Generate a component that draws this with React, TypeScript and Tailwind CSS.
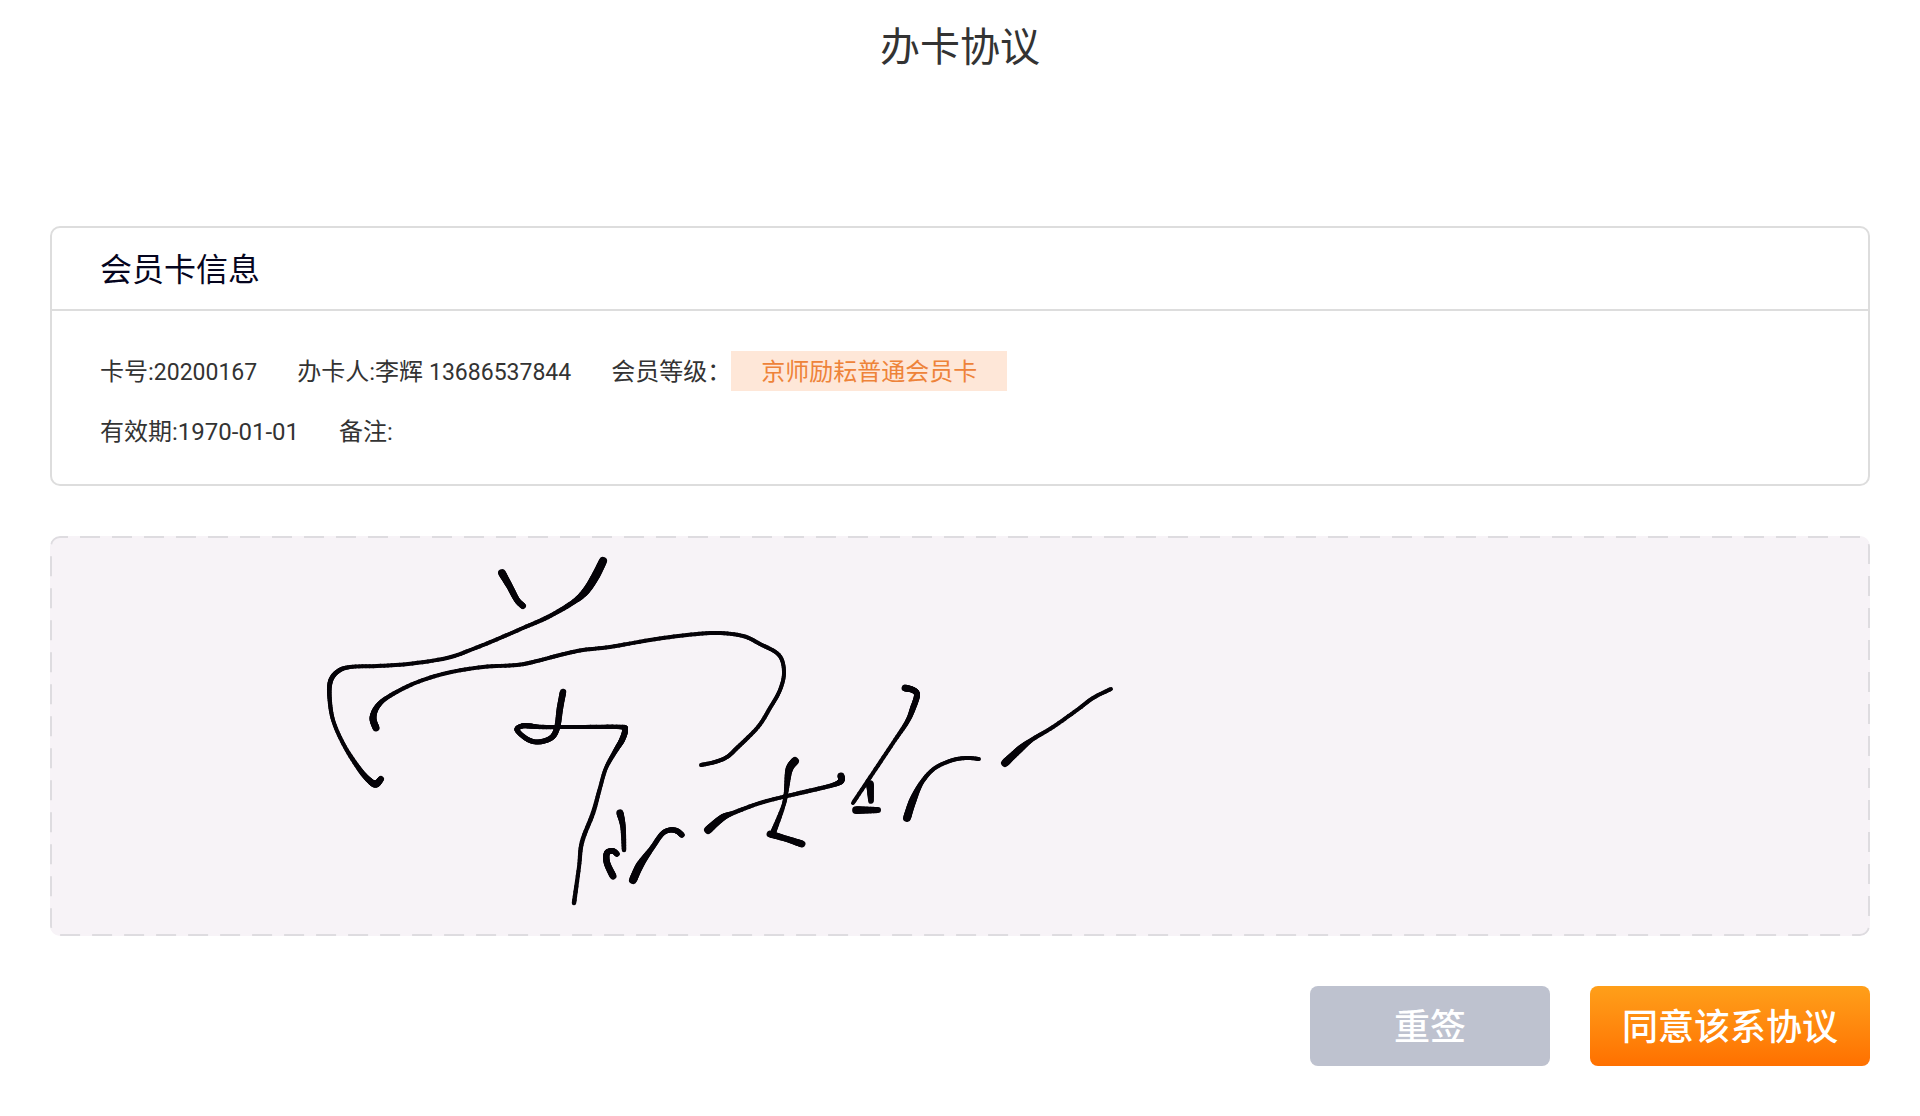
import type { ReactNode } from "react";
import clsx from "clsx";

// x, y and pen width at that point
type PenPoint = [number, number, number];

const STROKES: PenPoint[][] = [
  [[452, 37, 8], [460, 51, 6.5], [467, 64, 6], [473, 70, 6]],
  [
    [553, 25, 8], [545, 41, 8.5], [535, 56, 7.5], [522, 67, 5], [498, 81, 4.3], [473, 92, 4],
    [450, 102, 4], [423, 113, 4], [397, 122, 4], [358, 128, 4], [327, 130, 4], [300, 131, 4],
    [287, 136, 4.7], [280, 147, 5], [280, 167, 4.3], [284, 187, 4], [295, 211, 4],
    [310, 234, 5], [320, 245, 6], [326, 248, 7], [331, 243, 6],
  ],
  [
    [326, 192, 7], [323, 182, 7], [327, 171, 5.5], [338, 161, 4.3], [365, 147, 4], [397, 137, 4],
    [433, 131, 4], [467, 129, 4], [487, 125, 4], [510, 119, 4], [533, 114, 4], [560, 111, 4],
    [600, 104, 4], [637, 99, 4], [667, 97, 4], [693, 100, 4], [710, 108, 4], [729, 119, 4],
    [734, 136, 4], [730, 154, 4], [720, 172, 4], [708, 191, 4], [688, 211, 4.3],
    [677, 221, 4], [665, 226, 4], [651, 229, 4],
  ],
  [
    [513, 156, 6.5], [510, 172, 6.5], [507, 192, 6], [501, 202, 5.5], [488, 206, 5],
    [477, 203, 5], [467, 194, 5], [472, 190, 5], [480, 190, 5.3], [493, 191, 4.3],
    [530, 191, 4], [570, 191, 4.5], [575, 194, 6], [572, 204, 6], [566, 214, 5],
    [556, 232, 4], [550, 252, 4], [543, 277, 4.5], [532, 306, 4.5], [529, 331, 4], [524, 367, 4.5],
  ],
  [[570, 277, 7.5], [573, 291, 5.5], [574, 314, 4.5]],
  [[567, 318, 5.5], [563, 315, 5.5], [557, 317, 6], [557, 327, 6.5], [563, 340, 7]],
  [
    [583, 344, 8], [590, 329, 8], [602, 312, 5], [612, 298, 5], [620, 294, 5],
    [627, 295, 5.5], [632, 299, 5.5],
  ],
  [
    [658, 294, 8], [672, 282, 7], [683, 277, 4.5], [710, 267, 4], [737, 260, 4],
    [763, 254, 4.3], [783, 249, 4.3], [791, 245, 6], [791, 240, 7],
  ],
  [[745, 225, 8], [739, 234, 7.5], [736, 257, 4.5], [733, 271, 4], [723, 297, 6]],
  [[720, 298, 7], [737, 303, 6], [752, 308, 7]],
  [
    [855, 152, 7], [863, 154, 6], [867, 159, 6], [863, 172, 6], [857, 186, 4.7],
    [843, 207, 4], [823, 237, 4], [803, 267, 4],
  ],
  [[820, 248, 8], [821, 265, 5.5]],
  [[806, 274, 8], [828, 274, 6]],
  [
    [857, 282, 8], [863, 264, 7.5], [872, 246, 4.5], [885, 232, 4], [903, 224, 4],
    [917, 222, 4], [929, 223, 4],
  ],
  [
    [955, 227, 8], [970, 213, 7], [983, 203, 4.3], [1003, 191, 4], [1027, 174, 4],
    [1043, 162, 4], [1061, 153, 4],
  ],
];

const STEPS = 8;

// Catmull-Rom through the pen points, so the line and its width both change smoothly.
function smooth(points: PenPoint[]): PenPoint[] {
  const out: PenPoint[] = [points[0]];
  for (let i = 0; i < points.length - 1; i++) {
    const p0 = points[Math.max(i - 1, 0)];
    const p1 = points[i];
    const p2 = points[i + 1];
    const p3 = points[Math.min(i + 2, points.length - 1)];
    for (let s = 1; s <= STEPS; s++) {
      const t = s / STEPS;
      const at = (k: 0 | 1) =>
        0.5 *
        (2 * p1[k] +
          (p2[k] - p0[k]) * t +
          (2 * p0[k] - 5 * p1[k] + 4 * p2[k] - p3[k]) * t * t +
          (3 * p1[k] - p0[k] - 3 * p2[k] + p3[k]) * t * t * t);
      out.push([at(0), at(1), p1[2] + (p2[2] - p1[2]) * t]);
    }
  }
  return out;
}

function Signature() {
  return (
    <g stroke="#050308" strokeLinecap="round">
      {STROKES.map((stroke, i) => {
        const pts = smooth(stroke);
        return (
          <g key={i}>
            {pts.slice(1).map((p, j) => (
              <line key={j} x1={pts[j][0]} y1={pts[j][1]} x2={p[0]} y2={p[1]} strokeWidth={p[2]} />
            ))}
          </g>
        );
      })}
    </g>
  );
}

function SignaturePad() {
  return (
    <section className="mt-[50px] h-[400px] overflow-hidden rounded-[10px] bg-[#f7f3f7]">
      <svg className="block h-full w-full" role="img" aria-label="签名">
        <rect
          x="1"
          y="1"
          rx="9"
          fill="none"
          stroke="#dedce0"
          strokeWidth="2"
          strokeDasharray="20 12"
          strokeDashoffset="12"
          style={{ width: "calc(100% - 2px)", height: "calc(100% - 2px)" }}
        />
        <Signature />
      </svg>
    </section>
  );
}

type FieldProps = { label: string; className?: string; children?: ReactNode };

function Field({ label, className, children }: FieldProps) {
  return (
    <div className="flex">
      <dt className="pt-0.5">{label}</dt>
      <dd className={clsx("pt-0.5", className)}>{children}</dd>
    </div>
  );
}

export default function App() {
  return (
    <div className="bg-white px-[50px] font-[Roboto,'Noto_Sans_CJK_SC',sans-serif] text-[#333333]">
      <header className="pt-[18px]">
        <h1 className="text-center text-[40px] leading-[60px]">办卡协议</h1>
      </header>

      <main className="mt-[148px]">
        <section className="rounded-[10px] border-2 border-[#dddddd]">
          <h2 className="border-b-2 border-[#dddddd] px-12 pt-[3px] text-[32px] leading-[78px] text-[#05051e]">
            会员卡信息
          </h2>
          <dl className="flex flex-col gap-5 px-12 pt-10 pb-[33px] text-2xl leading-[38px]">
            <div className="flex flex-wrap gap-x-10">
              <Field label="卡号:">
                <span className="text-[23px] leading-none">20200167</span>
              </Field>
              <Field label="办卡人:">
                李辉 <span className="text-[23px] leading-none">13686537844</span>
              </Field>
              <Field label="会员等级：" className="bg-[#fee7d8] px-[30px] text-[#ee8339]">
                京师励耘普通会员卡
              </Field>
            </div>
            <div className="flex flex-wrap gap-x-10">
              <Field label="有效期:">1970-01-01</Field>
              <Field label="备注:" />
            </div>
          </dl>
        </section>

        <SignaturePad />

        <div className="mt-[50px] flex justify-end gap-10 pb-[50px] text-4xl font-medium text-white">
          <button type="button" className="h-20 w-60 rounded-lg bg-[#bec2cf] pt-1">
            重签
          </button>
          <button
            type="button"
            className="h-20 w-[280px] rounded-lg bg-linear-to-b from-[#ff9f19] to-[#ff7000] pt-1"
          >
            同意该系协议
          </button>
        </div>
      </main>
    </div>
  );
}
